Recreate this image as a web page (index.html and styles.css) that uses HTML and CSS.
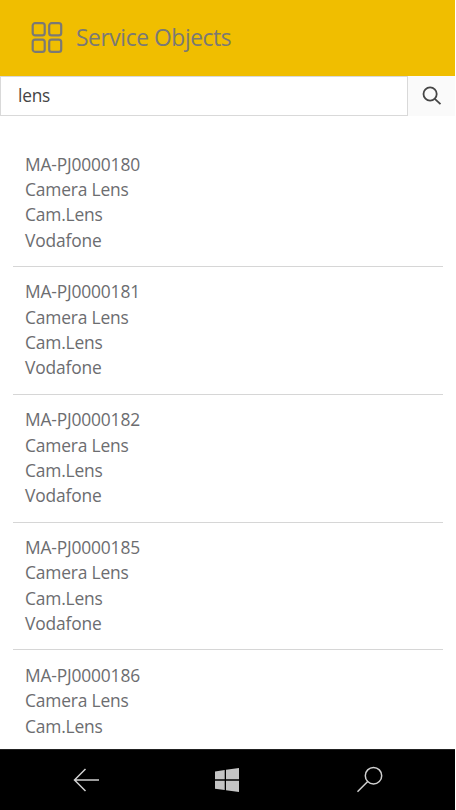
FILE: index.html
```html
<!DOCTYPE html>
<html lang="en">
<head>
<meta charset="utf-8">
<title>Service Objects</title>
<link rel="stylesheet" href="styles.css">
</head>
<body>
<div class="screen">
  <header class="header">
    <svg class="grid-icon" width="32" height="32" viewBox="0 0 32 32">
      <rect x="1.7" y="1.2" width="12" height="12.2" rx="2.4"/>
      <rect x="18.2" y="1.2" width="12" height="12.2" rx="2.4"/>
      <rect x="1.7" y="17.6" width="12" height="12.2" rx="2.4"/>
      <rect x="18.2" y="17.6" width="12" height="12.2" rx="2.4"/>
    </svg>
    <h1 class="title">Service Objects</h1>
  </header>
  <div class="search">
    <input class="search-input" type="text" value="lens">
    <button class="search-button">
      <svg width="20" height="20" viewBox="0 0 20 20"><circle cx="8.1" cy="8" r="6.6"/><path d="M12.8 12.8 18.5 18.2"/></svg>
    </button>
  </div>
  <main class="list">
    <article class="item"><p>MA-PJ0000180</p><p>Camera Lens</p><p>Cam.Lens</p><p>Vodafone</p></article>
    <article class="item"><p>MA-PJ0000181</p><p>Camera Lens</p><p>Cam.Lens</p><p>Vodafone</p></article>
    <article class="item"><p>MA-PJ0000182</p><p>Camera Lens</p><p>Cam.Lens</p><p>Vodafone</p></article>
    <article class="item"><p>MA-PJ0000185</p><p>Camera Lens</p><p>Cam.Lens</p><p>Vodafone</p></article>
    <article class="item"><p>MA-PJ0000186</p><p>Camera Lens</p><p>Cam.Lens</p></article>
  </main>
  <nav class="navbar">
    <svg class="line-icon" width="28" height="26" viewBox="0 0 28 26"><path d="M12.5 2 1.5 13l11 11M1.7 13H26"/></svg>
    <svg class="windows-icon" width="24" height="24" viewBox="0 0 24 24"><path d="M0 3.4 9.7 2v9.3H0zM11 1.8 24 0v11.3H11zM0 12.7h9.7V22L0 20.7zM11 12.7h13V24l-13-1.8z"/></svg>
    <svg class="line-icon" width="28" height="28" viewBox="0 0 28 28"><circle cx="17.5" cy="9.7" r="8.2"/><path d="M11.7 15.5 1.5 25.7"/></svg>
  </nav>
</div>
</body>
</html>
```
FILE: styles.css
```css
* { box-sizing: border-box; }
body {
  margin: 0;
  background: #fff;
  font-family: "Open Sans", "Noto Sans", sans-serif;
  color: #6c6d70;
}
.screen {
  width: 456px;
  height: 810px;
  padding-right: 1px;
  display: flex;
  flex-direction: column;
  overflow: hidden;
}
.header {
  flex: none;
  height: 76px;
  padding-left: 31px;
  display: flex;
  align-items: center;
  gap: 13px;
  background: #f0be00;
}
.grid-icon {
  flex: none;
  fill: none;
  stroke: #7a7975;
  stroke-width: 2.2;
}
.title {
  margin: 0;
  font-size: 22.8px;
  font-weight: 400;
  letter-spacing: -0.42px;
  line-height: 30px;
  color: #7a7975;
}
.search {
  flex: none;
  height: 40px;
  display: flex;
}
.search-input {
  width: 408px;
  padding: 0 16px 2px 17px;
  border: 1px solid #d9d9d9;
  outline: none;
  font: 17.3px "Open Sans", "Noto Sans", sans-serif;
  letter-spacing: -0.2px;
  color: #444;
}
.search-button {
  flex: 1;
  padding: 0 0 0 1px;
  border: 0;
  display: flex;
  align-items: center;
  justify-content: center;
  background: #fafafa;
}
.search-button svg {
  fill: none;
  stroke: #454545;
  stroke-width: 1.8;
}
.list {
  flex: 1;
  min-height: 0;
  overflow: hidden;
  padding: 23px 12px 0 13px;
}
.item {
  height: 127.85px;
  padding: 12.5px 12px 0;
  border-bottom: 1px solid #d6d6d6;
}
.item p {
  margin: 0;
  font-size: 17.4px;
  letter-spacing: -0.17px;
  line-height: 25.35px;
}
.navbar {
  flex: none;
  height: 61px;
  padding: 0 71px 0 73px;
  display: grid;
  grid-template-columns: 142px 1fr auto;
  align-items: center;
  border-top: 1px solid #222;
  background: #000;
}
.line-icon {
  fill: none;
  stroke: #d0d0d0;
  stroke-width: 1.5;
}
.windows-icon { fill: #c4c4c4; }
```
